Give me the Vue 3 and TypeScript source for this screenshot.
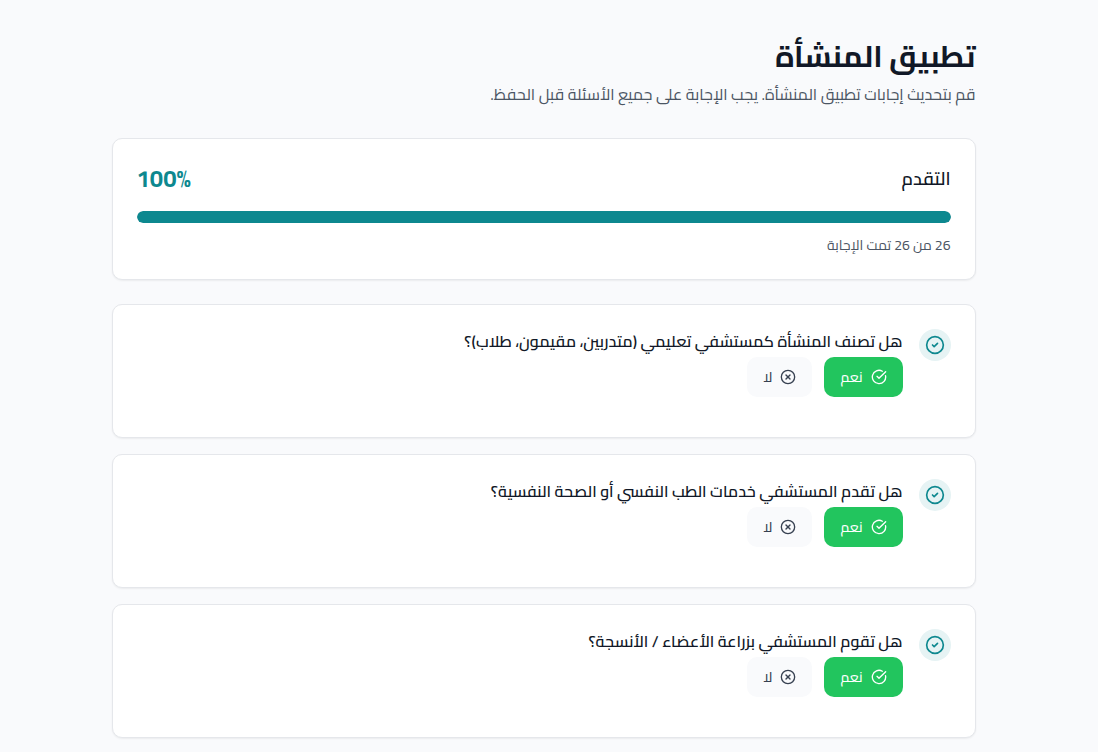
<script setup lang="ts">
import { computed, ref } from 'vue'

interface Question {
  id: number
  text: string
  answer: boolean
}

const total = 26
const answered = ref(26)
const percent = computed(() => Math.round((answered.value / total) * 100))

const questions = ref<Question[]>([
  { id: 1, text: 'هل تصنف المنشأة كمستشفي تعليمي (متدربين، مقيمون، طلاب)؟', answer: true },
  { id: 2, text: 'هل تقدم المستشفي خدمات الطب النفسي أو الصحة النفسية؟', answer: true },
  { id: 3, text: 'هل تقوم المستشفي بزراعة الأعضاء / الأنسجة؟', answer: true },
])
</script>

<template>
  <div class="page" dir="rtl" lang="ar">
    <main class="container">
      <header class="header">
        <h1 class="title">تطبيق المنشأة</h1>
        <p class="subtitle">قم بتحديث إجابات تطبيق المنشأة. يجب الإجابة على جميع الأسئلة قبل الحفظ.</p>
      </header>

      <section class="card progress">
        <div class="progress-head">
          <h2 id="progress-label" class="progress-label">التقدم</h2>
          <span class="percent" dir="ltr">{{ percent }}%</span>
        </div>
        <div
          class="track"
          role="progressbar"
          aria-labelledby="progress-label"
          :aria-valuenow="percent"
          aria-valuemin="0"
          aria-valuemax="100"
        >
          <div class="fill" :style="{ width: percent + '%' }"></div>
        </div>
        <p class="count">{{ answered }} من {{ total }} تمت الإجابة</p>
      </section>

      <div class="questions">
        <section v-for="q in questions" :key="q.id" class="card question">
          <span class="status">
            <svg class="icon-lg" viewBox="0 0 24 24" aria-hidden="true">
              <circle cx="12" cy="12" r="10" />
              <path d="m9 12 2 2 4-4" />
            </svg>
          </span>
          <div class="body">
            <h3 :id="'q' + q.id" class="question-text">{{ q.text }}</h3>
            <div class="answers" role="group" :aria-labelledby="'q' + q.id">
              <button
                type="button"
                class="answer"
                :class="{ yes: q.answer }"
                :aria-pressed="q.answer"
                @click="q.answer = true"
              >
                <svg class="icon" viewBox="0 0 24 24" aria-hidden="true">
                  <path d="M21.801 10A10 10 0 1 1 17 3.335" />
                  <path d="m9 11 3 3L22 4" />
                </svg>
                <span>نعم</span>
              </button>
              <button
                type="button"
                class="answer"
                :class="{ no: !q.answer }"
                :aria-pressed="!q.answer"
                @click="q.answer = false"
              >
                <svg class="icon" viewBox="0 0 24 24" aria-hidden="true">
                  <circle cx="12" cy="12" r="10" />
                  <path d="m15 9-6 6" />
                  <path d="m9 9 6 6" />
                </svg>
                <span>لا</span>
              </button>
            </div>
          </div>
        </section>
      </div>
    </main>
  </div>
</template>

<style>
body {
  background: #f9fafc;
}
</style>

<style scoped>
.page {
  padding: 32px 27px 14px 16px;
  font-family: Cairo, "Noto Sans Arabic", "DejaVu Sans", sans-serif;
  color: #111827;
}

.container {
  max-width: 864px;
  margin: 0 auto;
}

h1,
h2,
h3,
p {
  margin: 0;
}

.header {
  margin-bottom: 32px;
}

.title {
  font-size: 30px;
  line-height: 48px;
  font-weight: 700;
}

.subtitle {
  margin-top: 2px;
  font-size: 16px;
  line-height: 24px;
  color: #4b5563;
}

.card {
  border: 1px solid #e5e7eb;
  border-radius: 10px;
  background: #fff;
  padding: 24px;
  box-shadow: 0 1px 2px rgba(0, 0, 0, 0.06);
}

.progress-head {
  display: flex;
  align-items: center;
  justify-content: space-between;
  margin-bottom: 16px;
}

.progress-label {
  font-size: 18px;
  line-height: 28px;
  font-weight: 600;
}

.percent {
  font-size: 24px;
  line-height: 32px;
  font-weight: 700;
  color: #0d888f;
}

.track {
  height: 12px;
  border-radius: 6px;
  background: #e5e7eb;
  overflow: hidden;
}

.fill {
  height: 100%;
  border-radius: 6px;
  background: #0d888f;
}

.count {
  margin-top: 12px;
  font-size: 14px;
  line-height: 20px;
  color: #4b5563;
}

.questions {
  display: flex;
  flex-direction: column;
  gap: 16px;
  margin-top: 24px;
}

.question {
  display: flex;
  align-items: flex-start;
  gap: 16px;
}

.status {
  display: flex;
  align-items: center;
  justify-content: center;
  flex: none;
  width: 32px;
  height: 32px;
  border-radius: 50%;
  background: #e6f3f4;
  color: #0d888f;
}

.body {
  flex: 1;
  min-width: 0;
}

.question-text {
  font-size: 16px;
  line-height: 24px;
  font-weight: 600;
}

.answers {
  display: flex;
  gap: 12px;
  margin: 4px 0 16px;
}

.answer {
  display: flex;
  align-items: center;
  gap: 8px;
  height: 40px;
  padding: 0 16px;
  border: 0;
  border-radius: 10px;
  background: #f9fafc;
  color: #374151;
  font-family: inherit;
  font-size: 14px;
  line-height: 20px;
  font-weight: 500;
  cursor: pointer;
}

.answer.yes {
  background: #22c55e;
  color: #fff;
}

.answer.no {
  background: #ef4444;
  color: #fff;
}

.icon,
.icon-lg {
  flex: none;
  width: 16px;
  height: 16px;
  fill: none;
  stroke: currentColor;
  stroke-width: 2;
  stroke-linecap: round;
  stroke-linejoin: round;
}

.icon-lg {
  width: 20px;
  height: 20px;
}
</style>
